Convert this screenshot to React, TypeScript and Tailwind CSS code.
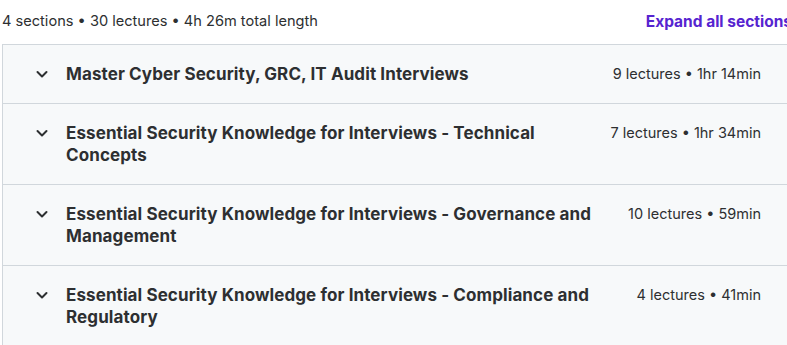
// Course curriculum summary: a header line and a stack of collapsed sections.
const sections = [
  { title: 'Master Cyber Security, GRC, IT Audit Interviews', meta: '9 lectures • 1hr 14min' },
  {
    title: 'Essential Security Knowledge for Interviews - Technical Concepts',
    meta: '7 lectures • 1hr 34min',
  },
  {
    title: 'Essential Security Knowledge for Interviews - Governance and Management',
    meta: '10 lectures • 59min',
  },
  {
    title: 'Essential Security Knowledge for Interviews - Compliance and Regulatory',
    meta: '4 lectures • 41min',
  },
]

function Chevron() {
  return (
    <svg
      className="shrink-0"
      width="16"
      height="22"
      viewBox="0 0 16 22"
      fill="none"
      aria-hidden="true"
    >
      <path
        d="M3.5 9 L8 13.5 L12.5 9"
        stroke="#2d2f31"
        strokeWidth="2"
        strokeLinecap="round"
        strokeLinejoin="round"
      />
    </svg>
  )
}

export default function App() {
  return (
    <div
      className="w-[787px] h-[345px] overflow-hidden bg-white text-[#2d2f31]"
      style={{ fontFamily: 'Inter, "Liberation Sans", sans-serif' }}
    >
      <div className="ml-[2px] w-[794px]">
        <div className="flex h-[44px] w-[790px] items-center justify-between">
          <span className="text-[14.6px]">4 sections • 30 lectures • 4h 26m total length</span>
          <button type="button" className="text-[15.5px] font-bold text-[#5624d0]">
            Expand all sections
          </button>
        </div>

        <div className="border border-[#d1d7dc] bg-[#f7f9fa]">
          {sections.map((section, i) => (
            <div
              key={section.title}
              className={
                i === 0
                  ? 'flex items-start py-[18px] pl-[31px] pr-[34px]'
                  : 'flex items-start border-t border-[#d1d7dc] py-[18px] pl-[31px] pr-[34px]'
              }
            >
              <div className="flex flex-1 items-start gap-[16px]">
                <Chevron />
                <h3 className="text-[17px] font-bold leading-[22px] tracking-[0.1px]">
                  {section.title}
                </h3>
              </div>
              <span className="ml-6 shrink-0 whitespace-nowrap text-[14.5px] leading-[22px]">
                {section.meta}
              </span>
            </div>
          ))}
        </div>
      </div>
    </div>
  )
}
